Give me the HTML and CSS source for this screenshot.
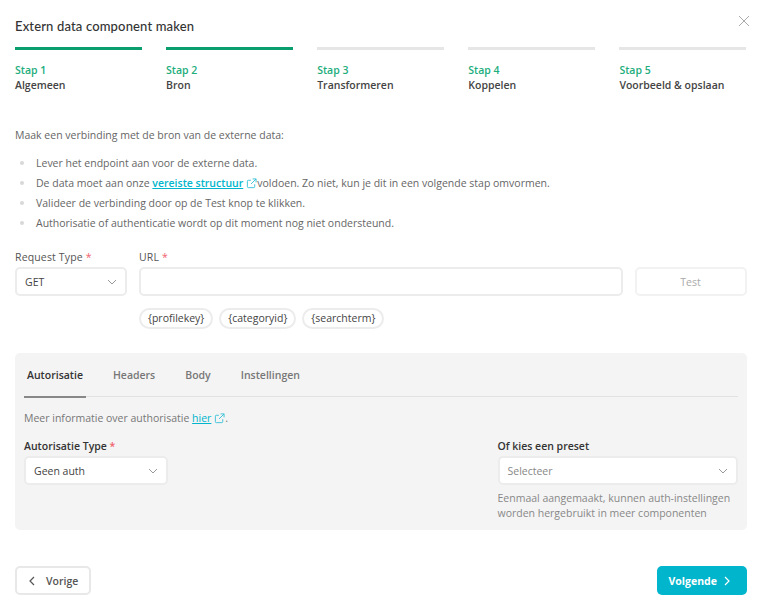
FILE: index.html
```html
<!DOCTYPE html>
<html lang="nl">
<head>
<meta charset="utf-8">
<title>Extern data component maken</title>
<link rel="stylesheet" href="styles.css">
</head>
<body>
<svg class="sprite" width="0" height="0" aria-hidden="true">
  <symbol id="ext" viewBox="0 0 12 12"><path d="M9.5 6.8v2.7a1 1 0 0 1-1 1h-6a1 1 0 0 1-1-1v-6a1 1 0 0 1 1-1h2.8M7.2 1h3.8v3.8M11 1 5.5 6.5" fill="none" stroke="currentColor" stroke-width="1"/></symbol>
  <symbol id="down" viewBox="0 0 10 6"><path d="M1 1l4 4 4-4" fill="none" stroke="currentColor" stroke-width="1"/></symbol>
</svg>
<main class="modal">
  <header class="head">
    <h1 class="title">Extern data component maken</h1>
    <svg class="close" viewBox="0 0 12 12" width="12" height="12"><path d="M1 1l10 10M11 1 1 11" fill="none" stroke="currentColor" stroke-width="1"/></svg>
  </header>
  <ol class="steps">
    <li class="step done"><span class="num">Stap 1</span><span class="name">Algemeen</span></li>
    <li class="step done"><span class="num">Stap 2</span><span class="name">Bron</span></li>
    <li class="step"><span class="num">Stap 3</span><span class="name">Transformeren</span></li>
    <li class="step"><span class="num">Stap 4</span><span class="name">Koppelen</span></li>
    <li class="step"><span class="num">Stap 5</span><span class="name">Voorbeeld &amp; opslaan</span></li>
  </ol>
  <p class="intro">Maak een verbinding met de bron van de externe data:</p>
  <ul class="bullets">
    <li>Lever het endpoint aan voor de externe data.</li>
    <li>De data moet aan onze <a class="link strong" href="#">vereiste structuur</a><svg class="ext gap" width="11" height="11"><use href="#ext"/></svg>voldoen. Zo niet, kun je dit in een volgende stap omvormen.</li>
    <li>Valideer de verbinding door op de Test knop te klikken.</li>
    <li>Authorisatie of authenticatie wordt op dit moment nog niet ondersteund.</li>
  </ul>
  <section class="request">
    <div class="field type">
      <label class="label">Request Type <span class="req">*</span></label>
      <div class="select"><span>GET</span><svg class="chev" width="10" height="6"><use href="#down"/></svg></div>
    </div>
    <div class="field url">
      <label class="label">URL <span class="req">*</span></label>
      <div class="input"></div>
      <div class="chips"><span class="chip">{profilekey}</span><span class="chip">{categoryid}</span><span class="chip">{searchterm}</span></div>
    </div>
    <button class="test" type="button">Test</button>
  </section>
  <section class="panel">
    <nav class="tabs">
      <span class="tab active">Autorisatie</span><span class="tab">Headers</span><span class="tab">Body</span><span class="tab">Instellingen</span>
    </nav>
    <p class="info">Meer informatie over authorisatie <a class="link" href="#">hier</a> <svg class="ext" width="11" height="11"><use href="#ext"/></svg>.</p>
    <div class="auth">
      <div class="field auth-type">
        <label class="label dark">Autorisatie Type <span class="req">*</span></label>
        <div class="select"><span>Geen auth</span><svg class="chev" width="10" height="6"><use href="#down"/></svg></div>
      </div>
      <div class="field preset">
        <label class="label dark">Of kies een preset</label>
        <div class="select"><span class="placeholder">Selecteer</span><svg class="chev" width="10" height="6"><use href="#down"/></svg></div>
        <p class="hint">Eenmaal aangemaakt, kunnen auth-instellingen worden hergebruikt in meer componenten</p>
      </div>
    </div>
  </section>
  <footer class="foot">
    <button class="btn prev" type="button"><svg width="6" height="10" viewBox="0 0 6 10"><path d="M5 1 1 5l4 4" fill="none" stroke="currentColor" stroke-width="1.2"/></svg>Vorige</button>
    <button class="btn next" type="button">Volgende<svg width="6" height="10" viewBox="0 0 6 10"><path d="m1 1 4 4-4 4" fill="none" stroke="currentColor" stroke-width="1.2"/></svg></button>
  </footer>
</main>
</body>
</html>
```
FILE: styles.css
```css
* { box-sizing: border-box; }
html, body { margin: 0; padding: 0; background: #fff; }
body { font-family: "Open Sans", "Liberation Sans", sans-serif; font-size: 10.5px; color: #666; width: 760px; height: 612px; overflow: hidden; }
.sprite { position: absolute; }
.modal { padding: 0 13.5px 0 15px; display: flex; flex-direction: column; }
.head { display: flex; justify-content: space-between; height: 47px; padding-top: 17px; }
.title { margin: 0; font-family: Lato, sans-serif; font-size: 13px; line-height: 18px; font-weight: 500; color: #333; letter-spacing: .15px; }
.close { color: #aaa; margin: -2px -3px 0 0; }
.steps { display: grid; grid-template-columns: repeat(5, 1fr); column-gap: 24px; margin: 0; padding: 0; list-style: none; }
.step { border-top: 3px solid #e6e6e6; padding-top: 13px; display: flex; flex-direction: column; }
.step.done { border-top-color: #0a9e6e; }
.num { color: #22ad7c; line-height: 15px; font-weight: 600; }
.name { color: #444; line-height: 15px; font-weight: 600; }
.intro { margin: 34px 0 0; line-height: 16px; }
.bullets { margin: 10px 0 0; padding: 0 0 0 21px; list-style: none; }
.bullets li { height: 20px; line-height: 20px; position: relative; }
.bullets li::before { content: ""; position: absolute; left: -16px; top: 8px; width: 4px; height: 4px; border-radius: 50%; background: #d8d8d8; }
.link { color: #00b5cc; text-decoration: underline; }
.link.strong { font-weight: 600; }
.ext { color: #33c1d6; vertical-align: -2px; }
.ext.gap { margin-left: 3px; }
.request { display: flex; margin-top: 16px; }
.field { display: flex; flex-direction: column; }
.label { line-height: 16px; color: #555; font-weight: 500; letter-spacing: .15px; margin-bottom: 2px; }
.label.dark { color: #333; font-weight: 600; letter-spacing: 0; }
.req { color: #f0616d; }
.type { width: 112px; margin-right: 12px; }
.url { flex: 1; margin-right: 12px; }
.select, .input { height: 29px; background: #fff; border: 2px solid #ececec; border-radius: 5px; }
.select { display: flex; align-items: center; justify-content: space-between; padding: 0 8px; color: #444; }
.chev { color: #999; }
.placeholder { color: #888; }
.chips { display: flex; gap: 6px; margin-top: 12px; }
.chip { height: 21px; line-height: 17px; padding: 0 7px; border: 2px solid #ececec; border-radius: 11px; color: #444; font-weight: 500; }
.test { flex: none; width: 112px; height: 29px; margin-top: 18px; background: #fff; border: 2px solid #f2f2f2; border-radius: 5px; color: #aaa; font: inherit; }
.panel { margin-top: 24px; height: 177px; background: #f4f4f4; border-radius: 5px; padding: 0 9px; }
.tabs { display: flex; height: 44px; border-bottom: 1px solid #e2e2e2; }
.tab { padding: 15px 3px 0; margin-right: 24px; color: #777; font-weight: 600; border-bottom: 2px solid transparent; height: 45px; }
.tab.active { color: #333; border-bottom-color: #888; }
.info { margin: 13px 0 0; line-height: 16px; color: #777; }
.auth { display: flex; justify-content: space-between; margin-top: 12px; }
.auth-type { width: 144px; }
.preset { width: 240px; }
.hint { margin: 6px 0 0; line-height: 15px; color: #888; }
.foot { display: flex; justify-content: space-between; margin-top: 36px; }
.btn { height: 29px; display: flex; align-items: center; border-radius: 5px; font: inherit; }
.prev { width: 76px; padding: 0 0 0 12px; gap: 11px; background: #fff; border: 2px solid #e8e8e8; color: #555; font-weight: 600; }
.next { width: 90px; padding: 0 0 0 12px; gap: 7px; background: #00b5cc; border: 0; color: #fff; font-weight: 700; }
```
